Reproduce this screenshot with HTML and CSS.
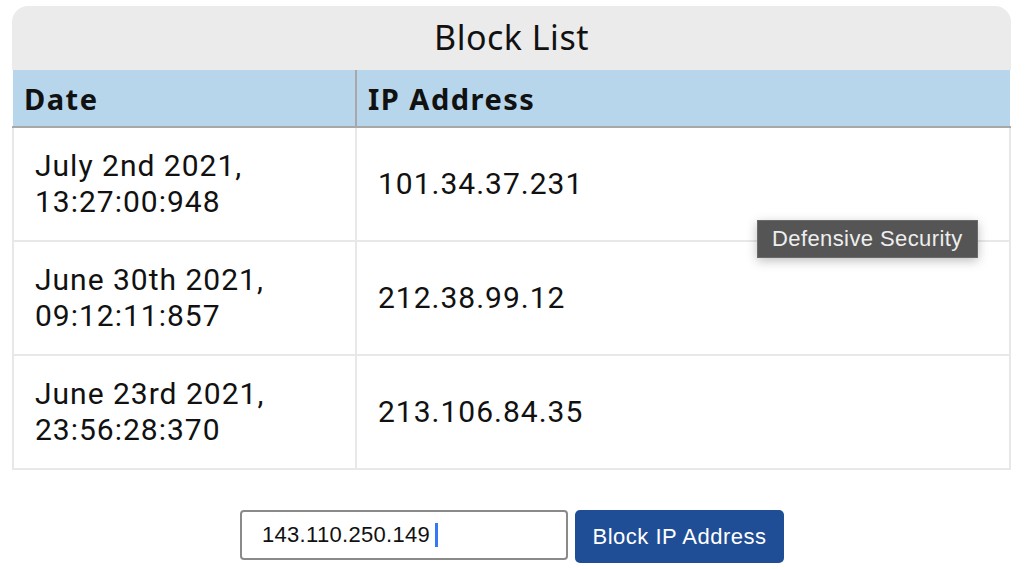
FILE: index.html
```html
<!DOCTYPE html>
<html>
<head>
<meta charset="utf-8">
<link rel="stylesheet" href="styles.css">
</head>
<body>
<div class="card">
  <div class="title">Block List</div>
  <table class="list">
    <thead>
      <tr><th class="c-date">Date</th><th>IP Address</th></tr>
    </thead>
    <tbody>
      <tr><td class="c-date"><span class="ln">July 2nd 2021,</span><span class="ln">13:27:00:948</span></td><td>101.34.37.231</td></tr>
      <tr><td class="c-date"><span class="ln">June 30th 2021,</span><span class="ln">09:12:11:857</span></td><td>212.38.99.12</td></tr>
      <tr><td class="c-date"><span class="ln">June 23rd 2021,</span><span class="ln">23:56:28:370</span></td><td>213.106.84.35</td></tr>
    </tbody>
  </table>
  <div class="tooltip">Defensive Security</div>
</div>
<form class="block-form">
  <div class="input"><span>143.110.250.149</span><span class="caret"></span></div>
  <button type="button" class="btn">Block IP Address</button>
</form>
</body>
</html>
```

FILE: styles.css
```css
html, body { margin: 0; padding: 0; background: #fff; }
body {
  font-family: "Noto Sans", "Open Sans", sans-serif;
  color: #111;
  width: 1030px;
  height: 570px;
  overflow: hidden;
}
.card {
  position: relative;
  margin: 6px 19px 0 12px;
}
.title {
  background: #ebebeb;
  border-radius: 16px 16px 0 0;
  height: 64px;
  line-height: 62px;
  text-align: center;
  font-size: 34px;
  letter-spacing: 0.5px;
}
.list {
  width: 100%;
  border-collapse: collapse;
  table-layout: fixed;
}
.list th {
  background: #b8d6eb;
  text-align: left;
  font-size: 29px;
  font-weight: 700;
  letter-spacing: 1.5px;
  height: 56px;
  padding: 0 11px;
  border-bottom: 2px solid #a8a8a8;
  border-left: 2px solid #a8a8a8;
}
.list th.c-date { border-left: none; }
.list .c-date { width: 320px; }
.list td {
  height: 112px;
  padding: 0 21px;
  font-family: Roboto, "Noto Sans", sans-serif;
  font-size: 30px;
  letter-spacing: 1px;
  line-height: 36px;
  border: 2px solid #e8e8e8;
  vertical-align: middle;
}
.ln { display: block; height: 36px; }
.tooltip {
  position: absolute;
  left: 745px;
  top: 214px;
  background: #555;
  color: #eee;
  font-family: "Liberation Sans", Arial, sans-serif;
  font-size: 22px;
  letter-spacing: 0.4px;
  line-height: 26px;
  padding: 5px 14px;
  border: 1px solid #6a6a6a;
  box-shadow: 0 3px 10px rgba(0,0,0,0.25);
}
.block-form {
  display: flex;
  justify-content: center;
  gap: 7px;
  margin-top: 40px;
  padding-right: 6px;
}
.input {
  width: 304px;
  height: 46px;
  border: 2px solid #8a8a8a;
  border-radius: 4px;
  display: flex;
  align-items: center;
  padding-left: 20px;
  font-family: "Liberation Sans", Arial, sans-serif;
  font-size: 22px;
  letter-spacing: 0.3px;
  color: #111;
}
.caret {
  display: inline-block;
  width: 3px;
  height: 24px;
  background: #3478f6;
  margin-left: 5px;
}
.btn {
  width: 209px;
  height: 53px;
  background: #1f4e96;
  color: #fff;
  border: none;
  border-radius: 5px;
  font-family: "Liberation Sans", Arial, sans-serif;
  font-size: 22px;
  letter-spacing: 0.5px;
}
```
